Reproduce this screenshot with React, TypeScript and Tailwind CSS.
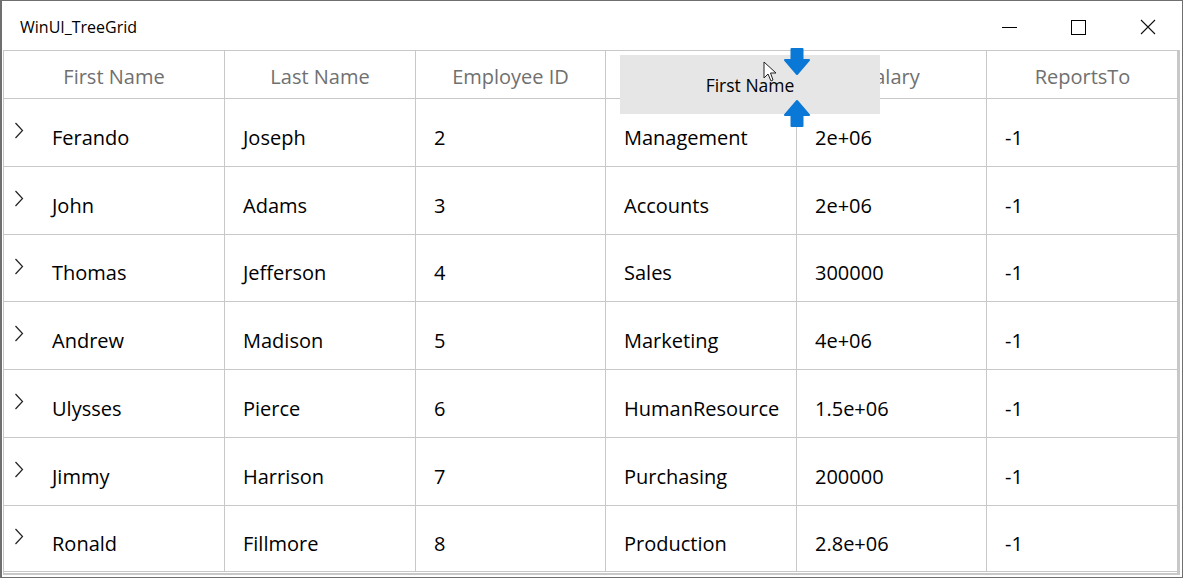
import React from 'react';

const rows = [
  ['Ferando', 'Joseph', '2', 'Management', '2e+06', '-1'],
  ['John', 'Adams', '3', 'Accounts', '2e+06', '-1'],
  ['Thomas', 'Jefferson', '4', 'Sales', '300000', '-1'],
  ['Andrew', 'Madison', '5', 'Marketing', '4e+06', '-1'],
  ['Ulysses', 'Pierce', '6', 'HumanResource', '1.5e+06', '-1'],
  ['Jimmy', 'Harrison', '7', 'Purchasing', '200000', '-1'],
  ['Ronald', 'Fillmore', '8', 'Production', '2.8e+06', '-1'],
];

const rowHeights = ['h-[68px]', 'h-[68px]', 'h-[67px]', 'h-[68px]', 'h-[68px]', 'h-[68px]', 'h-[66px]'];
const colWidths = ['w-[221px]', 'w-[191px]', 'w-[190px]', 'w-[191px]', 'w-[190px]', 'w-[191px]'];
// Department header sits under the drag preview, so it is not drawn
const headers = ['First Name', 'Last Name', 'Employee ID', '', 'Salary', 'ReportsTo'];

const Chevron = () => (
  <svg width="10" height="18" viewBox="0 0 10 18" className="shrink-0">
    <polyline points="1.5,1 8.5,8.5 1.5,16" fill="none" stroke="#222" strokeWidth="1.2" />
  </svg>
);

const Arrow = ({ up }: { up?: boolean }) => (
  <svg width="28" height="28" viewBox="0 0 28 28" className={up ? 'rotate-180' : ''}>
    <path d="M8.5 1 H19.5 V12 H26 L14 26 L2 12 H8.5 Z" fill="#0a78d6" stroke="#0a78d6" strokeLinejoin="round" strokeWidth="2" />
  </svg>
);

const App = () => {
  return (
    <div className="relative h-[578px] w-[1183px] overflow-hidden border border-l-2 border-[#6f6f6f] bg-white font-['Open_Sans',sans-serif]">
      {/* title bar */}
      <div className="flex h-[49px] items-center justify-between">
        <div className="pl-[18px] pt-[3px] text-[16px] text-black">WinUI_TreeGrid</div>
        <div className="flex h-full items-center">
          <div className="flex h-full w-[69px] items-center justify-center">
            <div className="mt-[3px] h-px w-[15px] bg-black" />
          </div>
          <div className="flex h-full w-[69px] items-center justify-center">
            <div className="mt-[3px] h-[15px] w-[15px] border border-black" />
          </div>
          <div className="flex h-full w-[69px] items-center justify-center">
            <svg width="16" height="16" viewBox="0 0 16 16" className="mt-[3px]">
              <path d="M1 1 L15 15 M15 1 L1 15" stroke="#111" strokeWidth="1.1" />
            </svg>
          </div>
        </div>
      </div>

      {/* grid */}
      <div className="ml-px mr-[2px] h-[525px] border-x border-t border-[#c8c8c8] border-r-[3px] border-b-2">
        <div className="flex h-[48px] border-b border-[#c8c8c8]">
          {headers.map((h, i) => (
            <div
              key={i}
              className={`${colWidths[i]} flex shrink-0 items-center justify-center pt-[4px] text-[20px] text-[#707070] ${i < 5 ? 'border-r border-[#c8c8c8]' : ''}`}
            >
              {h}
            </div>
          ))}
        </div>
        {rows.map((r, ri) => (
          <div key={ri} className={`${rowHeights[ri]} flex border-b border-[#c8c8c8]`}>
            {r.map((c, ci) => (
              <div
                key={ci}
                className={`${colWidths[ci]} flex shrink-0 items-center pt-[10px] text-[20px] text-black ${ci < 5 ? 'border-r border-[#c8c8c8]' : ''} ${ci === 0 ? 'pl-[10px]' : 'pl-[18px]'}`}
              >
                {ci === 0 && (
                  <span className="mr-[28px] -mt-[13px]">
                    <Chevron />
                  </span>
                )}
                {c}
              </div>
            ))}
          </div>
        ))}
      </div>

      {/* drag preview */}
      <div className="absolute left-[618px] top-[54px] flex h-[59px] w-[260px] items-center justify-center bg-[#e6e6e6] pt-[2px] text-[17.5px] text-black">
        First Name
      </div>
      <div className="absolute left-[781px] top-[47px]">
        <Arrow />
      </div>
      <div className="absolute left-[781px] top-[98px]">
        <Arrow up />
      </div>
      <svg className="absolute left-[761px] top-[60px]" width="14" height="22" viewBox="0 0 14 22">
        <path d="M1 1 V17 L5 13 L8 20 L10 19 L7.5 12 H13 Z" fill="white" stroke="#222" strokeWidth="1" strokeLinejoin="round" />
      </svg>
    </div>
  );
};

export default App;
